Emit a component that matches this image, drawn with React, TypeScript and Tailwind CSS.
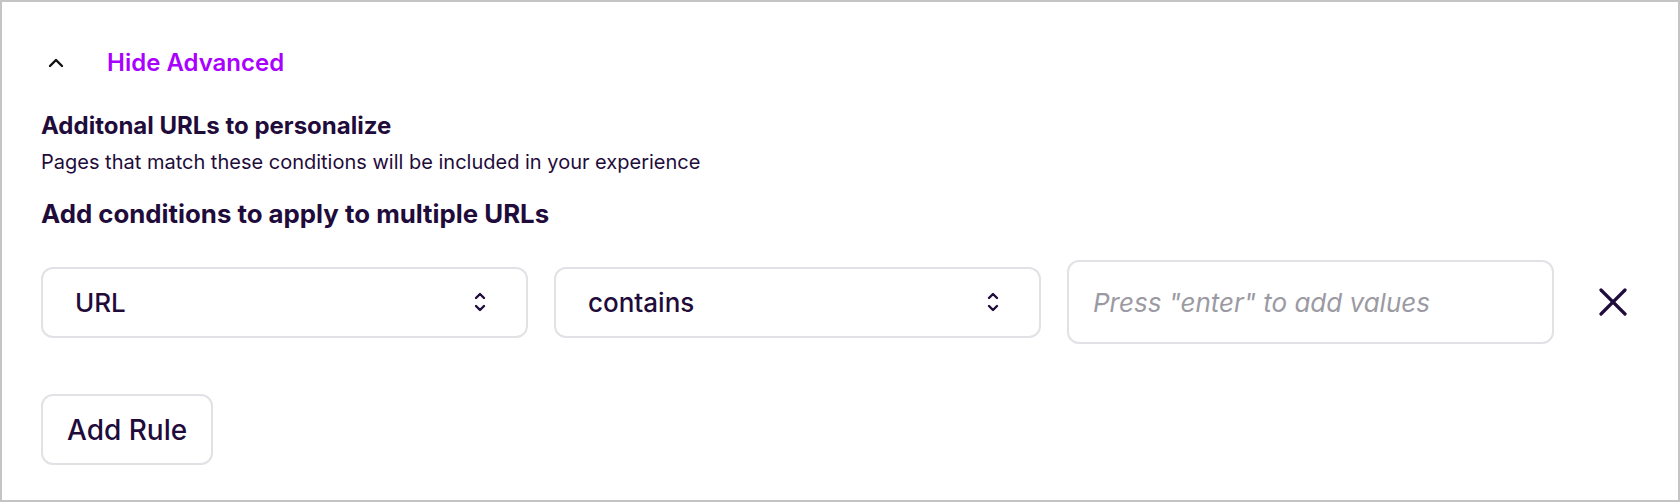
import React from "react";

const SelectArrows = () => (
  <svg width="14" height="20" viewBox="0 0 14 20" fill="none" stroke="currentColor" strokeWidth="2.4" strokeLinecap="round" strokeLinejoin="round">
    <polyline points="3,6 7,2 11,6" />
    <polyline points="3,14 7,18 11,14" />
  </svg>
);

const SelectBox = ({ value }: { value: string }) => (
  <div className="flex h-[71px] w-[487px] items-center justify-between rounded-xl border-2 border-[#e2e1e6] bg-white pl-8 pr-[39px]">
    <span className="text-[26px] font-medium text-[#1f0c3b]">{value}</span>
    <span className="text-[#1f0c3b]">
      <SelectArrows />
    </span>
  </div>
);

export default function App() {
  return (
    <div
      className="box-border h-[502px] w-[1680px] border-2 border-[#c4c4c4] bg-white pl-[39px] pt-[45px]"
      style={{ fontFamily: "Inter, 'Noto Sans', sans-serif" }}
    >
      {/* toggle */}
      <div className="flex h-8 items-center">
        <svg width="16" height="10" viewBox="0 0 16 10" fill="none" stroke="#111" strokeWidth="2.4" strokeLinecap="round" strokeLinejoin="round" className="ml-[7px]">
          <polyline points="2,8 8,2 14,8" />
        </svg>
        <span className="ml-[43px] text-[24px] font-semibold leading-8 text-[#aa00ff]">Hide Advanced</span>
      </div>

      <h3 className="mt-[33px] text-[24px] font-bold leading-7 text-[#1f0c3b]">Additonal URLs to personalize</h3>
      <p className="mt-[10px] text-[20px] leading-6 text-[#1f0c3b]">
        Pages that match these conditions will be included in your experience
      </p>

      <h3 className="mt-6 text-[25.8px] font-bold leading-8 text-[#1f0c3b]">Add conditions to apply to multiple URLs</h3>

      {/* rule row */}
      <div className="mt-[30px] flex items-center gap-[26px]">
        <SelectBox value="URL" />
        <SelectBox value="contains" />
        <div className="flex h-[84px] w-[487px] items-center rounded-xl border-2 border-[#e2e1e6] bg-white px-6">
          <span className="text-[26px] italic text-[#9b9aa3]">Press "enter" to add values</span>
        </div>
        <button type="button" className="ml-[18px] text-[#1f0c3b]">
          <svg width="30" height="28" viewBox="0 0 30 28" fill="none" stroke="currentColor" strokeWidth="3.2" strokeLinecap="round">
            <line x1="3" y1="2" x2="27" y2="26" />
            <line x1="27" y1="2" x2="3" y2="26" />
          </svg>
        </button>
      </div>

      <button
        type="button"
        className="mt-[50px] flex h-[71px] items-center rounded-xl border-2 border-[#e2e1e6] bg-white px-6 text-[28px] font-medium text-[#1f0c3b]"
      >
        Add Rule
      </button>
    </div>
  );
}
